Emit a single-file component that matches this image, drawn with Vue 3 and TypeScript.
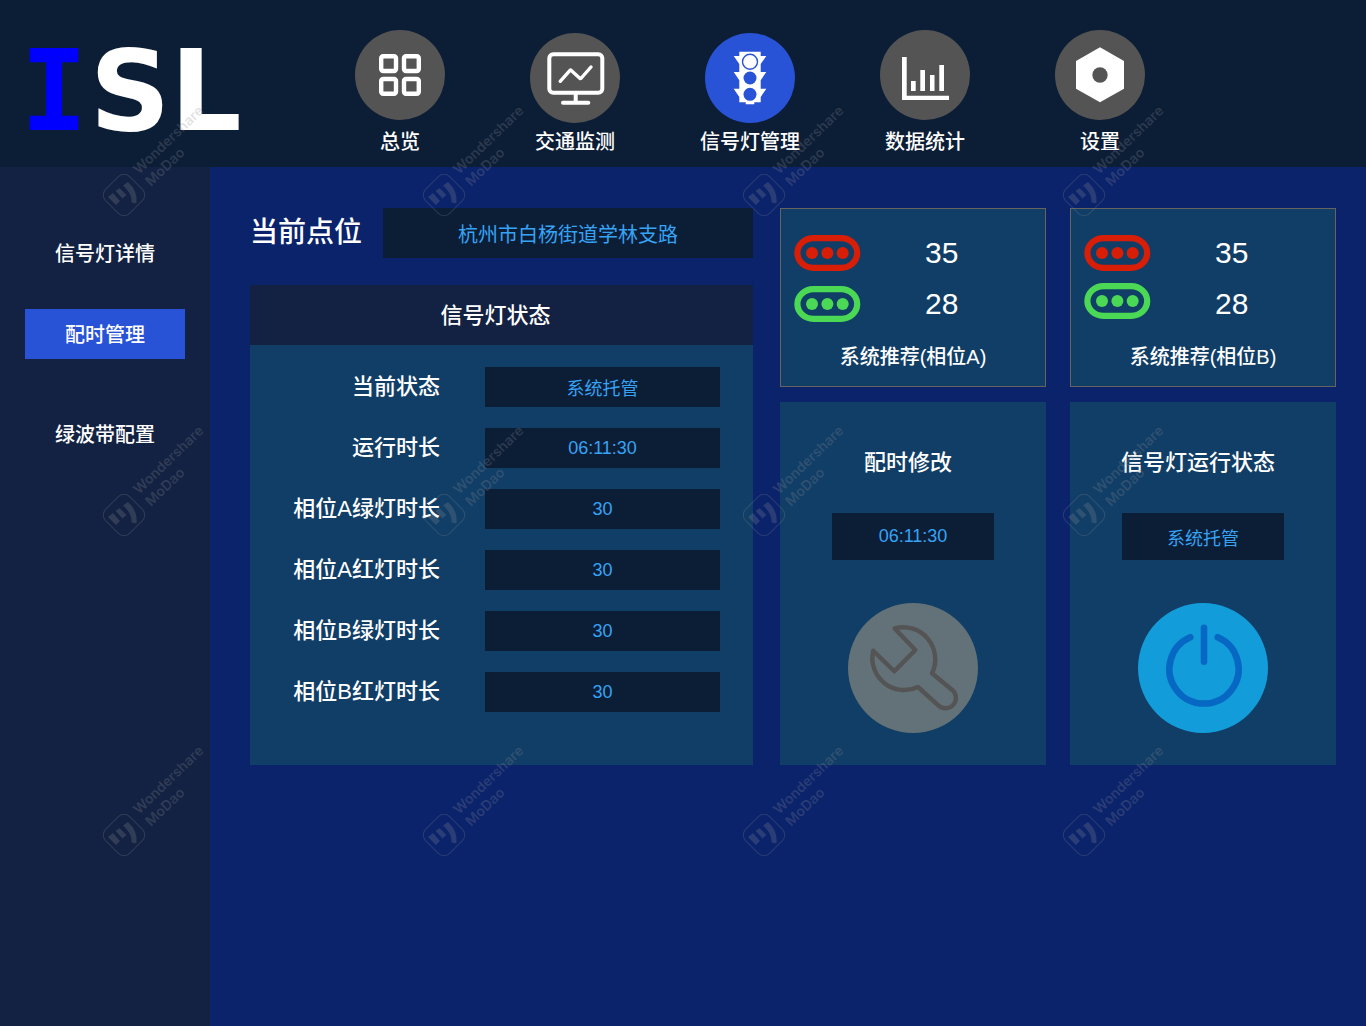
<script setup lang="ts">
import { ref } from 'vue'

type IconName = 'grid' | 'monitor' | 'lights' | 'chart' | 'nut'

interface NavItem {
  label: string
  icon: IconName
  low?: boolean
}

interface StatusRow {
  id: string
  label: string
  value: string
}

interface Recommendation {
  title: string
  red: number
  green: number
  tight?: boolean
}

const navItems: NavItem[] = [
  { label: '总览', icon: 'grid' },
  { label: '交通监测', icon: 'monitor', low: true },
  { label: '信号灯管理', icon: 'lights', low: true },
  { label: '数据统计', icon: 'chart' },
  { label: '设置', icon: 'nut' },
]
const activeNav = ref('信号灯管理')

const sideGroups: string[][] = [['信号灯详情', '配时管理'], ['绿波带配置']]
const activeSide = ref('配时管理')

const location = ref('杭州市白杨街道学林支路')
const statusRows = ref<StatusRow[]>([
  { id: 'state', label: '当前状态', value: '系统托管' },
  { id: 'uptime', label: '运行时长', value: '06:11:30' },
  { id: 'a-green', label: '相位A绿灯时长', value: '30' },
  { id: 'a-red', label: '相位A红灯时长', value: '30' },
  { id: 'b-green', label: '相位B绿灯时长', value: '30' },
  { id: 'b-red', label: '相位B红灯时长', value: '30' },
])
const recommendations: Recommendation[] = [
  { title: '系统推荐(相位A)', red: 35, green: 28 },
  { title: '系统推荐(相位B)', red: 35, green: 28, tight: true },
]
const timing = ref('06:11:30')
const runState = ref('系统托管')
</script>

<template>
  <div class="page">
    <header class="top">
      <div class="logo">
        <span class="logo-i">I</span><span>S</span><span>L</span>
      </div>
      <nav class="nav">
        <a
          v-for="item in navItems"
          :key="item.label"
          href="#"
          class="nav-item"
          :class="{ active: item.label === activeNav, low: item.low }"
          @click.prevent="activeNav = item.label"
        >
          <span class="nav-icon">
            <svg viewBox="0 0 90 90" width="90" height="90" aria-hidden="true">
              <circle class="disc" cx="45" cy="45" r="45" />
              <g v-if="item.icon === 'grid'" fill="none" stroke="#fff" stroke-width="4.4">
                <rect x="26.200" y="26.200" width="14.800" height="14.800" rx="2" />
                <rect x="49" y="26.200" width="14.800" height="14.800" rx="2" />
                <rect x="26.200" y="49" width="14.800" height="14.800" rx="2" />
                <rect x="49" y="49" width="14.800" height="14.800" rx="2" />
              </g>
              <g v-else-if="item.icon === 'monitor'" fill="none" stroke="#fff" stroke-width="4" stroke-linecap="round" stroke-linejoin="round">
                <rect x="19.3" y="21.3" width="53" height="38.4" rx="4" />
                <path d="M45.7 60V69M33 69.8H58.3" />
                <path stroke-width="3.4" d="M30.2 48.3L40.2 37.2Q40.6 36.900 41 37.2L49.800 45.200Q50.600 45.700 51.300 45L61 34" />
              </g>
              <g v-else-if="item.icon === 'lights'" fill="#fff">
                <path d="M34.3 18.7H55.7V23H61.3L55.7 31V39H61.3L55.7 47.3V55.7H61.3L55.7 64V69.3H49.3V71.3H40.7V69.3H34.3V64L28.7 55.7H34.3V47.3L28.7 39H34.3V31L28.7 23H34.3Z" />
                <circle class="hole-ring" cx="45" cy="28.7" r="7.5" />
                <circle class="disc" cx="45" cy="45" r="6.5" />
                <circle class="disc" cx="45" cy="61.3" r="6.5" />
              </g>
              <g v-else-if="item.icon === 'chart'" fill="#fff">
                <path d="M22 27H26.7V65.7H69V70H22Z" />
                <path d="M31 51H35.7V61H31ZM40.3 40H45V61H40.3ZM50 45H54.5V61H50ZM59.3 35H64V61H59.3Z" />
              </g>
              <g v-else fill="#fff">
                <path d="M45 17.3L69 31V58.7L45 72.3L21 58.7V31Z" />
                <circle class="disc" cx="45" cy="45" r="7.7" />
              </g>
            </svg>
          </span>
          <span class="nav-label">{{ item.label }}</span>
        </a>
      </nav>
    </header>

    <div class="body">
      <nav class="side">
        <div v-for="(group, index) in sideGroups" :key="index" class="side-group">
          <a
            v-for="name in group"
            :key="name"
            href="#"
            class="side-item"
            :class="{ active: name === activeSide }"
            @click.prevent="activeSide = name"
          >{{ name }}</a>
        </div>
      </nav>

      <main class="main">
        <section class="left">
          <div class="location">
            <label for="location">当前点位</label>
            <input id="location" v-model="location" class="field" type="text" />
          </div>
          <div class="status">
            <h2>信号灯状态</h2>
            <div class="status-rows">
              <div v-for="row in statusRows" :key="row.id" class="status-row">
                <label :for="row.id">{{ row.label }}</label>
                <input :id="row.id" v-model="row.value" class="field" type="text" />
              </div>
            </div>
          </div>
        </section>

        <section class="right">
          <article v-for="card in recommendations" :key="card.title" class="card">
            <div class="card-body">
              <div class="lamps" :class="{ tight: card.tight }">
                <svg v-for="tone in ['red', 'green']" :key="tone" class="lamp" :class="tone" viewBox="0 0 67 36" width="67" height="36" aria-hidden="true">
                  <rect x="3.4" y="3.200" width="59.800" height="29.600" rx="16" fill="none" stroke="currentColor" stroke-width="6.2" />
                  <g fill="currentColor">
                    <circle cx="18" cy="18" r="6" />
                    <circle cx="33.4" cy="18" r="6" />
                    <circle cx="48.7" cy="18" r="6" />
                  </g>
                </svg>
              </div>
              <div class="counts">
                <span>{{ card.red }}</span>
                <span>{{ card.green }}</span>
              </div>
            </div>
            <h3>{{ card.title }}</h3>
          </article>

          <article class="panel">
            <label for="timing">配时修改</label>
            <input id="timing" v-model="timing" class="field" type="text" />
            <button type="button" class="round wrench" aria-label="配时修改">
              <svg viewBox="0 0 130 130" width="130" height="130" fill="none" stroke="#545454" stroke-width="4.4" stroke-linejoin="round">
                <path d="M46.7 25.4A32 32 0 0 1 84 70.3L104.5 87.2A10.2 10.2 0 0 1 90.5 102.600L70 84A32 32 0 0 1 25.2 47.7L46.3 68.3L67.3 47Z" />
              </svg>
            </button>
          </article>

          <article class="panel">
            <label for="run-state">信号灯运行状态</label>
            <input id="run-state" v-model="runState" class="field" type="text" />
            <button type="button" class="round power" aria-label="信号灯运行状态">
              <svg viewBox="0 0 130 130" width="130" height="130" fill="none" stroke="#0768c4" stroke-width="6.6" stroke-linecap="round">
                <path d="M66 24.7V58.7M52.3 34.2A34.6 34.6 0 1 0 79.7 34.2" />
              </svg>
            </button>
          </article>
        </section>
      </main>
    </div>

    <div class="watermarks" aria-hidden="true">
      <svg v-for="n in 12" :key="n" viewBox="0 0 320 320" width="320" height="320">
        <rect x="107" y="178" width="34" height="34" rx="8" transform="rotate(45 124 195)" fill="none" stroke="currentColor" />
        <path fill="currentColor" d="M108 197L113 193L120 201L116 205ZM115.500 191L119.500 188L126.500 195L122.500 198.500ZM123 185.500L128 182Q138 191 136.500 203.500L131.500 202.500Q132 193 123 185.500Z" />
        <g fill="currentColor" font-size="14" font-weight="600">
          <text x="139" y="175" transform="rotate(-44 139 175)">Wondershare</text>
          <text x="151" y="187" transform="rotate(-44 151 187)">MoDao</text>
        </g>
      </svg>
    </div>
  </div>
</template>

<style>
body {
  margin: 0;
  background: #0a236b;
}
</style>

<style scoped>
.page {
  position: relative;
  display: flex;
  flex-direction: column;
  min-height: 100vh;
  color: #fff;
  font-family: 'Liberation Sans', 'Noto Sans CJK SC', sans-serif;
  font-size: 20px;
  font-weight: 500;
}

.page * {
  box-sizing: border-box;
}

a {
  color: inherit;
  text-decoration: none;
}

h2,
h3 {
  margin: 0;
  font-weight: 500;
}

.top {
  display: flex;
  height: 167px;
  background: #0c1e36;
}

.logo {
  display: grid;
  flex: none;
  grid-template-columns: 76px 76px 76px;
  justify-items: center;
  align-items: center;
  width: 350px;
  padding: 14px 0 0 16px;
  font-family: 'DejaVu Sans', sans-serif;
  font-size: 112px;
  font-weight: 700;
  line-height: 1;
}

.logo-i {
  color: #00f;
  font-family: 'DejaVu Sans Mono', monospace;
}

.nav {
  display: flex;
  gap: 75px;
  padding-top: 30px;
}

.nav-item {
  display: flex;
  flex-direction: column;
  align-items: center;
  width: 100px;
}

.nav-icon {
  display: flex;
  align-items: flex-start;
  height: 93px;
}

.nav-item.low .nav-icon {
  align-items: flex-end;
}

.disc {
  fill: #545454;
}

.active .disc {
  fill: #2953d6;
}

.hole-ring {
  fill: none;
  stroke: #2953d6;
  stroke-width: 1.4;
}

.nav-label {
  line-height: 38px;
  white-space: nowrap;
}

.body {
  display: flex;
  flex: 1;
}

.side {
  display: flex;
  flex: none;
  flex-direction: column;
  gap: 50px;
  width: 210px;
  padding: 61px 25px 0;
  background: #132242;
}

.side-group {
  display: flex;
  flex-direction: column;
  gap: 31px;
}

.side-item {
  height: 50px;
  line-height: 52px;
  text-align: center;
}

.side-item.active {
  background: #2953d6;
}

.main {
  display: flex;
  flex: 1;
  align-items: flex-start;
  gap: 27px;
  padding: 41px 30px 41px 40px;
  background: #0a236b;
}

.left {
  display: flex;
  flex: 503 1 0;
  flex-direction: column;
  gap: 27px;
}

.location {
  display: flex;
  align-items: center;
  gap: 21px;
}

.location label {
  flex: none;
  font-size: 28px;
  line-height: 50px;
}

.field {
  min-width: 0;
  padding: 0;
  border: 0;
  border-radius: 0;
  background: #0c1e36;
  color: #36a3f5;
  font-family: inherit;
  font-size: 18px;
  font-weight: 400;
  line-height: 20px;
  text-align: center;
}

.location .field {
  flex: 1;
  height: 50px;
  font-size: 20px;
}

.status {
  min-height: 480px;
  background: #113e66;
}

.status h2 {
  height: 60px;
  padding-right: 12px;
  background: #132242;
  font-size: 22px;
  line-height: 62px;
  text-align: center;
}

.status-rows {
  display: flex;
  flex-direction: column;
  gap: 21px;
  padding: 22px 33px 22px 0;
}

.status-row {
  display: flex;
  align-items: center;
  gap: 45px;
}

.status-row label {
  flex: 1;
  font-size: 22px;
  line-height: 40px;
  text-align: right;
}

.status-row .field {
  width: 50%;
  height: 40px;
}

.right {
  display: grid;
  flex: 556 1 0;
  grid-template-columns: 1fr 1fr;
  gap: 15px 24px;
}

.card {
  min-height: 179px;
  padding-top: 18px;
  border: 1px solid #666360;
  background: #113e66;
}

.card-body {
  display: flex;
  gap: 64px;
  padding-left: 13px;
}

.lamps {
  display: flex;
  flex-direction: column;
  gap: 15px;
  padding-top: 8px;
}

.lamps.tight {
  gap: 12px;
}

.lamp {
  display: block;
}

.lamp.red {
  color: #d81e06;
}

.lamp.green {
  color: #4bd855;
}

.counts {
  display: flex;
  flex-direction: column;
  font-size: 30px;
  font-weight: 400;
  line-height: 51px;
}

.card h3 {
  font-size: 20px;
  line-height: 56px;
  text-align: center;
}

.panel {
  display: flex;
  flex-direction: column;
  align-items: center;
  padding: 31px 0 32px;
  background: #113e66;
}

.panel label {
  padding-right: 10px;
  font-size: 22px;
  line-height: 60px;
}

.panel .field {
  width: 162px;
  height: 47px;
  margin: 20px 0 43px;
}

.round {
  width: 130px;
  height: 130px;
  padding: 0;
  border: 0;
  border-radius: 50%;
}

.round svg {
  display: block;
}

.wrench {
  background: #637178;
}

.power {
  background: #139cda;
}

.watermarks {
  position: absolute;
  inset: 0;
  display: grid;
  grid-template-columns: repeat(auto-fill, 320px);
  align-content: start;
  overflow: hidden;
  color: rgba(140, 140, 150, 0.25);
  font-family: Inter, sans-serif;
  pointer-events: none;
}
</style>
